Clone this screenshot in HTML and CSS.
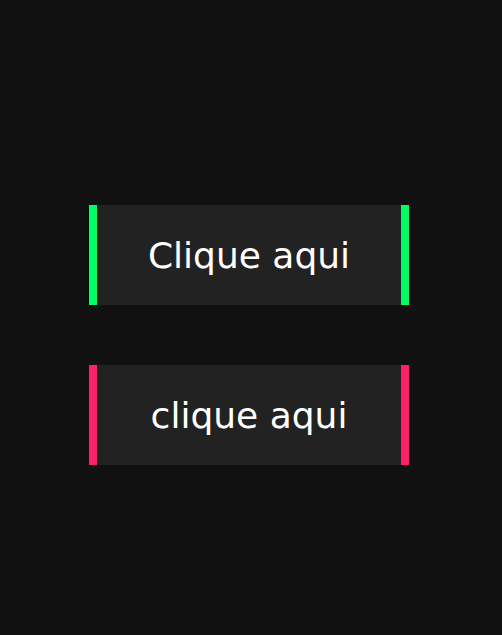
FILE: index.html
```html
<!DOCTYPE html>
<html>
<head>
<meta charset="utf-8">
<link rel="stylesheet" href="styles.css">
</head>
<body>
<main class="stack">
  <button class="btn btn-green">Clique aqui</button>
  <button class="btn btn-pink">clique aqui</button>
</main>
</body>
</html>
```
FILE: styles.css
```css
html, body {
  margin: 0;
  padding: 0;
  background: #111111;
  height: 100%;
}
.stack {
  display: flex;
  flex-direction: column;
  gap: 60px;
  padding: 205px 0 0 89px;
}
.btn {
  width: 320px;
  height: 100px;
  background: #222222;
  color: #ffffff;
  border: none;
  border-left: 8px solid;
  border-right: 8px solid;
  font-family: "DejaVu Sans", sans-serif;
  font-size: 36px;
  font-weight: 400;
  padding: 0;
  cursor: pointer;
  display: flex;
  align-items: center;
  justify-content: center;
}
.btn-green { border-color: #00ff66; }
.btn-pink { border-color: #ff1f6b; }
```
